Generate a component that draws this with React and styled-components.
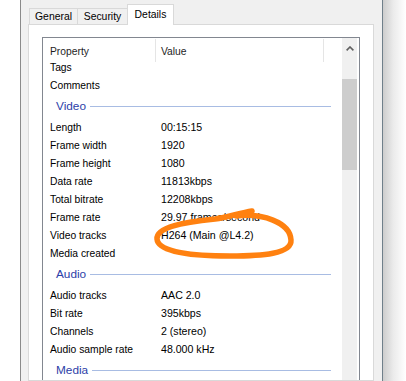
import React from 'react';
import styled, { createGlobalStyle } from 'styled-components';

const Global = createGlobalStyle`
  html, body { margin: 0; padding: 0; background: #fff; overflow: hidden; }
  body { font-family: "Liberation Sans", Arial, sans-serif; color: #000; }
`;

const Page = styled.div`
  position: relative;
  display: flex;
  width: 406px;
  height: 381px;
  padding-left: 20px;
  box-sizing: border-box;
  overflow: hidden;
  background: #fff;
`;

const Window = styled.div`
  width: 363px;
  flex-shrink: 0;
  box-sizing: border-box;
  border-left: 1px solid #8a8a8a;
  border-right: 1px solid #6f7f8a;
  background: #f0f0f0;
  padding: 4px 0 0 7px;
  display: flex;
  flex-direction: column;
`;

const Shadow = styled.div`
  flex: 1;
  background: linear-gradient(to right, #cdcdcd, #ebebeb 45%, #fff);
`;

const TabStrip = styled.div`
  display: flex;
  align-items: flex-end;
  height: 21px;
  margin: 0 0 -1px 1px;
  position: relative;
  z-index: 1;
`;

const Tab = styled.div`
  box-sizing: border-box;
  width: ${p => p.$w}px;
  height: ${p => (p.$active ? 21 : 17)}px;
  border: 1px solid #d9d9d9;
  border-bottom: ${p => (p.$active ? 'none' : '1px solid #d9d9d9')};
  background: ${p => (p.$active ? '#fff' : '#f0f0f0')};
  margin-left: ${p => (p.$first ? 0 : -1)}px;
  display: flex;
  align-items: center;
  justify-content: center;
  font-size: 10.4px;
  color: #000;
  padding-bottom: ${p => (p.$active ? 1 : 0)}px;
`;

const Panel = styled.div`
  width: 346px;
  box-sizing: border-box;
  flex: 1;
  min-height: 0;
  border: 1px solid #d9d9d9;
  background: #fff;
  padding: 12px 13px 0 13px;
  display: flex;
  flex-direction: column;
`;

const ListBox = styled.div`
  flex: 1;
  min-height: 0;
  border: 1px solid #828790;
  border-bottom: none;
  display: flex;
  background: #fff;
`;

const ListMain = styled.div`
  flex: 1;
  min-width: 0;
  display: flex;
  flex-direction: column;
`;

const Header = styled.div`
  height: 25px;
  flex-shrink: 0;
  display: flex;
  background: #fff;
  position: relative;
  z-index: 1;
`;

const HeaderCell = styled.div`
  box-sizing: border-box;
  width: ${p => p.$w}px;
  margin: 1px 0;
  padding: 1px 0 0 ${p => p.$pad}px;
  border-right: 1px solid #e5e5e5;
  display: flex;
  align-items: center;
  font-size: 10.3px;
  color: #1e1e1e;
`;

const Body = styled.div`
  flex: 1;
  min-height: 0;
  overflow: hidden;
`;

const Scrolled = styled.div`
  margin-top: -5px;
`;

const Row = styled.div`
  display: flex;
  align-items: center;
  height: 18px;
`;

const Label = styled.div`
  box-sizing: border-box;
  width: 118px;
  padding-left: 7px;
  font-size: 10.3px;
  white-space: nowrap;
`;

const Value = styled.div`
  font-size: 10.6px;
  white-space: nowrap;
`;

const Group = styled.div`
  display: flex;
  align-items: center;
  height: 24px;
  padding: 0 11px 0 13px;
`;

const GroupTitle = styled.div`
  font-size: 11.8px;
  color: #2c3ea8;
`;

const GroupLine = styled.div`
  flex: 1;
  height: 1px;
  margin-left: 4px;
  background: #a8bce3;
`;

const ScrollBar = styled.div`
  width: 15px;
  margin-right: 2px;
  background: #f0f0f0;
  display: flex;
  flex-direction: column;
  align-items: stretch;
`;

const ScrollButton = styled.div`
  height: 18px;
  display: flex;
  align-items: center;
  justify-content: center;
  padding-top: 1px;
`;

const Thumb = styled.div`
  margin-top: 22px;
  height: 91px;
  background: #cdcdcd;
`;

const Annotation = styled.svg`
  position: absolute;
  left: 0;
  top: 0;
  pointer-events: none;
`;

const groups = [
  {
    title: null,
    rows: [['Tags', ''], ['Comments', '']],
  },
  {
    title: 'Video',
    rows: [
      ['Length', '00:15:15'],
      ['Frame width', '1920'],
      ['Frame height', '1080'],
      ['Data rate', '11813kbps'],
      ['Total bitrate', '12208kbps'],
      ['Frame rate', '29.97 frames/second'],
      ['Video tracks', 'H264 (Main @L4.2)'],
      ['Media created', ''],
    ],
  },
  {
    title: 'Audio',
    rows: [
      ['Audio tracks', 'AAC 2.0'],
      ['Bit rate', '395kbps'],
      ['Channels', '2 (stereo)'],
      ['Audio sample rate', '48.000 kHz'],
    ],
  },
  {
    title: 'Media',
    rows: [],
  },
];

export default function App() {
  return (
    <>
      <Global />
      <Page>
        <Window>
          <TabStrip>
            <Tab $w={49} $first>General</Tab>
            <Tab $w={51}>Security</Tab>
            <Tab $w={47} $active>Details</Tab>
          </TabStrip>
          <Panel>
            <ListBox>
              <ListMain>
                <Header>
                  <HeaderCell $w={113} $pad={7}>Property</HeaderCell>
                  <HeaderCell $w={168} $pad={5}>Value</HeaderCell>
                </Header>
                <Body>
                  <Scrolled>
                    {groups.map((g, gi) => (
                      <React.Fragment key={gi}>
                        {g.title && (
                          <Group>
                            <GroupTitle>{g.title}</GroupTitle>
                            <GroupLine />
                          </Group>
                        )}
                        {g.rows.map(([k, v]) => (
                          <Row key={k}>
                            <Label>{k}</Label>
                            <Value>{v}</Value>
                          </Row>
                        ))}
                      </React.Fragment>
                    ))}
                  </Scrolled>
                </Body>
              </ListMain>
              <ScrollBar>
                <ScrollButton>
                  <svg width="8" height="5" viewBox="0 0 8 5">
                    <path d="M0.6 4.4 L4 1 L7.4 4.4" fill="none" stroke="#606060" strokeWidth="1.6" />
                  </svg>
                </ScrollButton>
                <Thumb />
              </ScrollBar>
            </ListBox>
          </Panel>
        </Window>
        <Shadow />
        <Annotation width="406" height="381" viewBox="0 0 406 381">
          <path
            d="M 236 216 C 262 213, 290 222, 291 240 C 292 254, 262 256, 230 256 C 195 256, 158 253, 157 239 C 156 227, 185 222, 215 219 C 228 217, 240 213, 252 211"
            fill="none"
            stroke="#ff8110"
            strokeWidth="5.5"
            strokeLinecap="round"
            strokeLinejoin="round"
          />
        </Annotation>
      </Page>
    </>
  );
}
